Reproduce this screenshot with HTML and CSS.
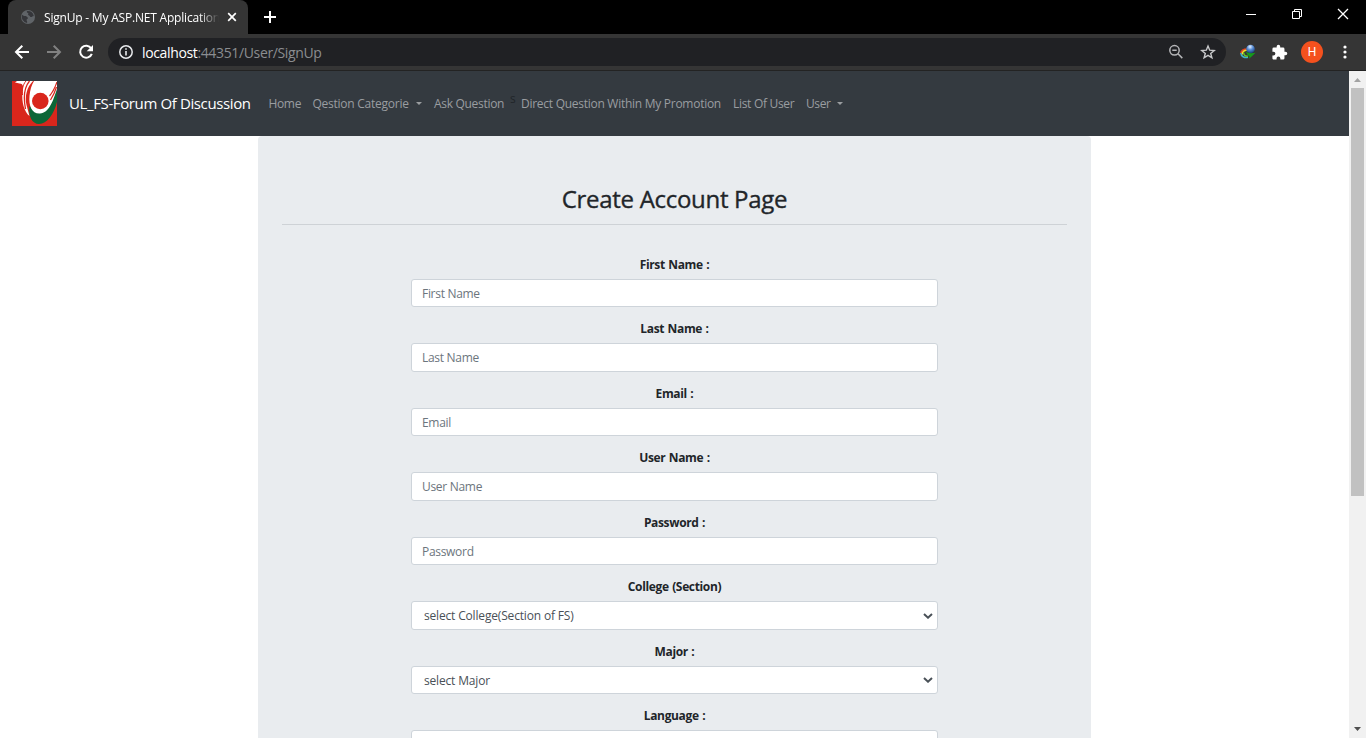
FILE: index.html
```html
<!DOCTYPE html>
<html lang="en">
<head>
<meta charset="utf-8">
<title>SignUp - My ASP.NET Application</title>
<link rel="stylesheet" href="styles.css">
</head>
<body>
<div class="window">
  <header class="tabstrip">
    <div class="tab">
      <svg class="tab-icon" width="16" height="16" viewBox="0 0 16 16"><circle cx="8" cy="8" r="7" fill="#606468"/><path d="M2.2 5.8C4 7.8 6 6.3 7.5 8.3s-1.8 1.5-.8 3.2c.6 1 .5 2 .3 2.6A6.3 6.3 0 0 1 2.200 5.800zM7.300 2c-1 1-.4 1.600.6 1.900 1.300.4-.7 1.900.7 2.300 1.500.4 1.300 2 2.500 1.900 1-.1 1.400-1 2.700-1.100A6.300 6.300 0 0 0 7.300 2z" fill="#35363a"/></svg>
      <span class="tab-title">SignUp - My ASP.NET Application</span>
      <svg class="tab-close" width="10" height="10" viewBox="0 0 10 10"><path d="M1.200 1.200l7.600 7.600M8.800 1.200l-7.600 7.600" stroke="#fff" stroke-width="1.700"/></svg>
    </div>
    <svg class="new-tab" width="12" height="12" viewBox="0 0 12 12"><path d="M6 0v12M0 6h12" stroke="#fff" stroke-width="2"/></svg>
    <div class="window-controls">
      <svg width="12" height="12" viewBox="0 0 12 12"><path d="M1 6.500h10" stroke="#fff"/></svg>
      <svg width="12" height="12" viewBox="0 0 12 12"><path d="M1.500 3.500h7v7h-7zM3.500 3.500v-2h7v7h-2" fill="none" stroke="#fff"/></svg>
      <svg width="12" height="12" viewBox="0 0 12 12"><path d="M1 1l10 10M11 1L1 11" stroke="#fff" stroke-width="1.300"/></svg>
    </div>
  </header>

  <div class="toolbar">
    <svg class="tool" width="16" height="16" viewBox="0 0 16 16"><path d="M15 8H2.500M8.300 1.700L2 8l6.300 6.300" fill="none" stroke="#fff" stroke-width="2"/></svg>
    <svg class="tool" width="16" height="16" viewBox="0 0 16 16"><path d="M1 8h12.500M7.700 1.700L14 8l-6.300 6.300" fill="none" stroke="#818181" stroke-width="2"/></svg>
    <svg class="tool" width="16" height="16" viewBox="0 0 16 16"><path d="M13.200 4.400A6 6 0 1 0 13.800 9.800" fill="none" stroke="#fff" stroke-width="2"/><path d="M15 1v6.300H8.700z" fill="#fff"/></svg>
    <div class="omnibox">
      <svg width="16" height="16" viewBox="0 0 16 16"><circle cx="8" cy="8" r="6.200" fill="none" stroke="#e8eaed" stroke-width="1.500"/><path d="M8 7v4.500M8 4.200v1.600" stroke="#e8eaed" stroke-width="1.600"/></svg>
      <span class="url"><b>localhost</b>:44351/User/SignUp</span>
      <svg class="zoom-icon" width="16" height="16" viewBox="0 0 16 16"><circle cx="6.500" cy="6.300" r="4.700" fill="none" stroke="#b5b6b8" stroke-width="1.500"/><path d="M4.300 6.300h4.400M10 9.800l4.300 4.300" stroke="#b5b6b8" stroke-width="1.500"/></svg>
      <svg width="16" height="16" viewBox="0 0 16 16"><path d="M8 2l1.700 4.200 4.500.3-3.500 2.900 1.200 4.400L8 11.400l-3.900 2.400 1.200-4.400L1.800 6.500l4.500-.3z" fill="none" stroke="#c8c9cb" stroke-width="1.400"/></svg>
    </div>
    <svg class="ext" width="18" height="16" viewBox="0 0 18 16"><defs><radialGradient id="globe" cx=".45" cy=".25" r=".75"><stop offset="0" stop-color="#e8f2ff"/><stop offset=".45" stop-color="#5a8fd6"/><stop offset="1" stop-color="#153c7b"/></radialGradient></defs><path d="M8.500 5C4.500 4.800 1.800 7 2 9.500" fill="none" stroke="#e0412a" stroke-width="1.600"/><path d="M8.500 6.300C5 6 3 8 3.300 10.500" fill="none" stroke="#f5df25" stroke-width="1.600"/><path d="M1.800 9c.2 3.500 3.500 5 7.200 4.300" fill="none" stroke="#3fb2c9" stroke-width="1.500"/><path d="M4.800 8.500c-.5 2.500 1.500 4 4.200 3.800" fill="none" stroke="#67c52b" stroke-width="1.500"/><circle cx="11.500" cy="5" r="4.300" fill="url(#globe)"/><path d="M7 7.500c2.500 1.800 5 2 9.500 1.300l-2 2-4.300 4 .2-2.600C8.500 11.500 7.500 9.800 7 7.500z" fill="#159a1b"/></svg>
    <svg class="puzzle" width="17" height="17" viewBox="0 0 24 24"><path fill="#fff" d="M20.500 11H19V7a2 2 0 0 0-2-2h-4V3.500a2.500 2.500 0 0 0-5 0V5H4a2 2 0 0 0-2 2v3.800h1.500a2.700 2.700 0 0 1 0 5.400H2V20c0 1.100.9 2 2 2h3.800v-1.500a2.700 2.700 0 0 1 5.400 0V22H17a2 2 0 0 0 2-2v-4h1.500a2.500 2.500 0 0 0 0-5z"/></svg>
    <span class="avatar">H</span>
    <svg class="menu-dots" width="4" height="14" viewBox="0 0 4 14"><g fill="#fff"><circle cx="2" cy="2" r="1.600"/><circle cx="2" cy="7" r="1.600"/><circle cx="2" cy="12" r="1.600"/></g></svg>
  </div>

  <div class="viewport">
    <main class="page">
      <nav class="navbar">
        <svg class="logo" width="45" height="45" viewBox="0 0 45 45"><rect width="45" height="45" fill="#d9261c"/><path d="M3 1.500L5 0H21C15 6 12.500 15 14.500 24l3 11C12 31 9.500 20 10.500 12c.8-6 1.500-9-3-9.500z" fill="#fff"/><path d="M17.500 0C12.500 6 11 15 13.500 28" fill="none" stroke="#d9261c" stroke-width="1.300"/><path d="M14 0C10.500 4 10 9 10.500 14" fill="none" stroke="#d9261c" stroke-width="1"/><path d="M45 6v15C42 33 35 43 27 43c-7 0-11-8-9.500-18l4 3c6 4 16 2 19-9z" fill="#0c6637"/><path d="M22 0h23v8C41 20 37 32 28 32.500 20 33 16.500 25 17.500 15 18 9 19.500 4 22 0z" fill="#fff"/><path d="M45 1C43 7 40.500 11.500 37.500 15M44.500 6c-1.500 5-3.500 9-6 13" fill="none" stroke="#d9261c" stroke-width="1.200"/><circle cx="28.300" cy="20" r="8.300" fill="#d9261c"/></svg>
        <a class="brand">UL_FS-Forum Of Discussion</a>
        <a class="link home">Home</a>
        <a class="link categorie caret">Qestion Categorie</a>
        <a class="link ask">Ask Question</a>
        <span class="stray">s</span>
        <a class="link direct">Direct Question Within My Promotion</a>
        <a class="link list">List Of User</a>
        <a class="link user caret">User</a>
      </nav>
      <section class="jumbotron">
        <h1 class="title">Create Account Page</h1>
        <hr class="rule">
        <form class="form">
          <div class="group"><label class="label">First Name :</label><input class="control" placeholder="First Name"></div>
          <div class="group"><label class="label">Last Name :</label><input class="control" placeholder="Last Name"></div>
          <div class="group"><label class="label">Email :</label><input class="control" placeholder="Email"></div>
          <div class="group"><label class="label">User Name :</label><input class="control" placeholder="User Name"></div>
          <div class="group"><label class="label">Password :</label><input class="control" placeholder="Password"></div>
          <div class="group"><label class="label">College (Section)</label><div class="control select"><span>select College(Section of FS)</span><svg width="10" height="6" viewBox="0 0 10 6"><path d="M1 1l4 3.700L9 1" fill="none" stroke="#495057" stroke-width="2"/></svg></div></div>
          <div class="group"><label class="label">Major :</label><div class="control select"><span>select Major</span><svg width="10" height="6" viewBox="0 0 10 6"><path d="M1 1l4 3.700L9 1" fill="none" stroke="#495057" stroke-width="2"/></svg></div></div>
          <div class="group"><label class="label">Language :</label><div class="control select"></div></div>
        </form>
      </section>
    </main>
    <div class="scrollbar">
      <svg width="17" height="17" viewBox="0 0 17 17"><path d="M5 11h7L8.500 7z" fill="#a3a3a3"/></svg>
      <div class="thumb"></div>
      <svg class="down" width="17" height="17" viewBox="0 0 17 17"><path d="M5 6h7L8.500 10z" fill="#505050"/></svg>
    </div>
  </div>
</div>
</body>
</html>
```
FILE: styles.css
```css
* { box-sizing: border-box; }
body { margin: 0; font-family: "Open Sans", "Noto Sans", sans-serif; font-size: 12px; color: #212529; overflow: hidden; }
svg { display: block; flex: none; }
.window { width: 1366px; height: 738px; display: flex; flex-direction: column; overflow: hidden; background: #fff; }

.tabstrip { height: 34px; flex: none; background: #000; display: flex; align-items: center; }
.tab { width: 240px; height: 34px; margin-left: 8px; padding: 0 11px 0 12px; background: #353535; border-radius: 8px 8px 0 0; display: flex; align-items: center; }
.tab-title { width: 175px; margin-left: 8px; color: #fff; white-space: nowrap; overflow: hidden; letter-spacing: -0.2px; -webkit-mask-image: linear-gradient(90deg, #000 155px, transparent); mask-image: linear-gradient(90deg, #000 155px, transparent); }
.tab-close { margin-left: 8px; }
.new-tab { margin-left: 16px; }
.window-controls { margin-left: auto; padding: 0 17px 6px 0; display: flex; gap: 34px; }

.toolbar { height: 37px; flex: none; background: #353535; border-bottom: 1px solid #232323; display: flex; align-items: center; padding-left: 14px; }
.tool { margin-right: 16px; }
.omnibox { width: 1118px; height: 28px; margin-left: -2px; padding: 0 10px; border-radius: 14px; background: #202124; display: flex; align-items: center; }
.url { margin-left: 8px; font-size: 14px; letter-spacing: -0.36px; color: #8b8d90; }
.url b { font-weight: 400; color: #fff; }
.zoom-icon { margin: 0 16px 0 auto; }
.ext { margin-left: 13px; }
.puzzle { margin-left: 14px; }
.avatar { width: 22px; height: 22px; margin-left: 13px; border-radius: 50%; background: #f4511e; color: #fff; font: 12px/22px Roboto, sans-serif; text-align: center; }
.menu-dots { margin-left: 20px; }

.viewport { flex: 1; min-height: 0; display: flex; }
.page { width: 1349px; overflow: hidden; }
.navbar { height: 65px; background: #343a40; display: flex; align-items: center; padding-left: 12px; white-space: nowrap; }
.brand { width: 193.500px; margin-left: 12px; padding-bottom: 1px; font-size: 15px; color: #fff; letter-spacing: -0.38px; }
.link { flex: none; padding: 0 6px; color: #9a9da0; letter-spacing: -0.2px; }
.home { width: 44px; letter-spacing: -0.35px; }
.categorie { width: 121.500px; letter-spacing: -0.25px; }
.ask { width: 82px; letter-spacing: -0.3px; }
.stray { width: 5px; padding-bottom: 11px; color: #212529; }
.direct { width: 212px; letter-spacing: -0.27px; }
.list { width: 73px; letter-spacing: -0.3px; }
.caret { display: flex; align-items: center; justify-content: space-between; }
.user { width: 49px; letter-spacing: -0.4px; }
.caret::after { content: ""; border: 3.500px solid transparent; border-top-color: #9a9da0; border-bottom: 0; }

.jumbotron { width: 833px; height: 700px; margin-left: 258px; padding: 49px 24px 48px; background: #e9ecef; border-radius: 4px; }
.title { margin: 0; text-align: center; font-size: 24px; line-height: 28.800px; font-weight: 500; letter-spacing: -0.3px; -webkit-text-stroke: 0.35px #212529; }
.rule { margin: 10.200px 0 12px; border: 0; border-top: 1px solid #ced2d6; }
.form { width: 527px; margin: 0 auto; padding-top: 18px; }
.group { height: 64.500px; }
.label { display: block; height: 24px; padding-top: 1px; line-height: 18px; text-align: center; font-weight: 700; letter-spacing: -0.35px; word-spacing: 0.7px; }
.control { display: block; width: 100%; height: 28.500px; padding: 0 9px 0 10px; border: 1px solid #ced4da; border-radius: 3px; background: #fff; color: #495057; font: inherit; letter-spacing: -0.3px; }
.control::placeholder { color: #6c757d; opacity: 1; }
.select { display: flex; align-items: center; justify-content: space-between; padding: 0 4px 0 12px; letter-spacing: -0.17px; }

.scrollbar { width: 17px; background: #f1f1f1; display: flex; flex-direction: column; align-items: center; }
.thumb { width: 13px; height: 408px; background: #c1c1c1; }
.down { margin-top: auto; }
```
